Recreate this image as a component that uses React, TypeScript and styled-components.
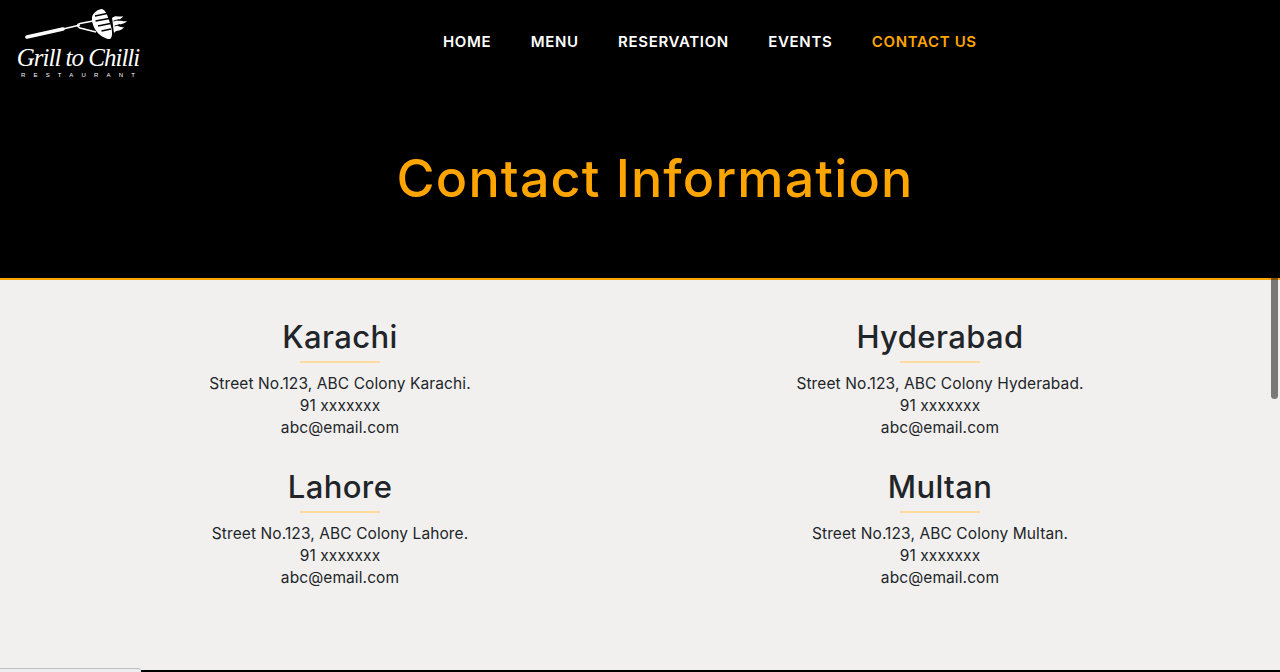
import React from "react";
import styled, { createGlobalStyle } from "styled-components";

const Global = createGlobalStyle`
  html, body { margin: 0; padding: 0; height: 100%; overflow: hidden; background: #f1f0ee; }
  body { font-family: Inter, "Noto Sans", sans-serif; color: #212529; }
`;

const Page = styled.div`
  height: 672px;
  display: flex;
  flex-direction: column;
  position: relative;
  overflow: hidden;
`;

const Hero = styled.header`
  height: 278px;
  background: #000;
  border-bottom: 2px solid #ffa500;
  display: flex;
  flex-direction: column;
`;

const TopBar = styled.div`
  display: flex;
  align-items: flex-start;
  padding: 8px 0 0 16px;
  height: 82px;
  box-sizing: border-box;
`;

const Logo = styled.div`
  width: 124px;
  display: flex;
  flex-direction: column;
  align-items: center;
  color: #fff;
`;

const LogoMark = styled.svg`
  width: 110px;
  height: 36px;
  display: block;
`;

const LogoName = styled.div`
  font-family: "Liberation Serif", serif;
  font-style: italic;
  font-size: 25px;
  line-height: 24px;
  letter-spacing: -1px;
  white-space: nowrap;
  margin-top: 2px;
`;

const LogoSub = styled.div`
  font-family: "Liberation Sans", sans-serif;
  font-size: 6px;
  line-height: 7px;
  letter-spacing: 8.2px;
  padding-left: 8px;
  white-space: nowrap;
  margin-top: 2px;
`;

const Nav = styled.nav`
  display: flex;
  gap: 39.4px;
  margin-left: 303px;
  padding-top: 24px;
`;

const NavLink = styled.a<{ $active?: boolean }>`
  font-size: 15px;
  line-height: 20px;
  font-weight: 600;
  letter-spacing: 0.66px;
  white-space: nowrap;
  color: ${(p) => (p.$active ? "#ffa500" : "#fff")};
`;

const Title = styled.h1`
  margin: 0;
  padding: 67px 0 0 30px;
  text-align: center;
  font-size: 52px;
  line-height: 60px;
  font-weight: 500;
  letter-spacing: 1.15px;
  color: #ffa500;
`;

const Content = styled.main`
  flex: 1;
  display: grid;
  grid-template-columns: 1fr 1fr;
  grid-auto-rows: 150px;
  padding: 39px 40px 0;
  border-bottom: 2px solid #000;
`;

const Office = styled.section`
  display: flex;
  flex-direction: column;
  align-items: center;
  text-align: center;
`;

const City = styled.h2`
  margin: 0;
  font-size: 31px;
  line-height: 36px;
  font-weight: 500;
  letter-spacing: 0.4px;
`;

const Rule = styled.div`
  width: 80px;
  height: 2px;
  background: #fddb9f;
  margin: 6px 0 10px;
`;

const Line = styled.p`
  margin: 0;
  font-size: 15.5px;
  line-height: 22px;
  letter-spacing: 0.1px;
`;

const Scrollbar = styled.div`
  position: absolute;
  top: 260px;
  right: 2px;
  width: 7px;
  height: 139px;
  border-radius: 4px;
  background: rgba(0, 0, 0, 0.5);
`;

const Badge = styled.div`
  position: absolute;
  left: 0;
  bottom: 0;
  width: 141px;
  height: 4px;
  background: #eceef2;
  border-top: 1px solid #bdbdbd;
  border-top-right-radius: 3px;
  box-sizing: border-box;
`;

const links = ["HOME", "MENU", "RESERVATION", "EVENTS"];
const offices = ["Karachi", "Hyderabad", "Lahore", "Multan"];

export default function App() {
  return (
    <Page>
      <Global />
      <Hero>
        <TopBar>
          <Logo>
            <LogoMark viewBox="0 0 110 36">
              <path d="M4 29 L40 21" stroke="#fff" strokeWidth="3.6" strokeLinecap="round" />
              <path d="M40 21 L57 17" stroke="#fff" strokeWidth="1.6" />
              <path d="M70 13 L57 15.5 Q52 17 57 20 L73 24" stroke="#fff" strokeWidth="1.5" fill="none" />
              <path d="M69 9 C70 5 75 1 79 1 C83 2 85 9 87 15 C89 21 90 27 88 30 C87 32 84 31 80 29 C74 26 68 17 69 9 Z" fill="#fff" />
              <path d="M72 8 L84 5.5 M72.5 13 L86 10.5 M75 18 L87.5 15.5 M78.5 23 L88 21" stroke="#000" strokeWidth="1.3" />
              <path d="M89 10 C93 6 96 10 100 8 C99 11 96 11 94 13 C98 12 101 14 104 13 C101 17 97 15 94 18 C97 18 99 20 101 19 C98 24 94 21 91 25 C90 20 90 15 89 10 Z" fill="#fff" />
              <path d="M90.5 13 L96 11.5 M91.5 18 L97 16.5" stroke="#000" strokeWidth="0.9" />
            </LogoMark>
            <LogoName>Grill to Chilli</LogoName>
            <LogoSub>RESTAURANT</LogoSub>
          </Logo>
          <Nav>
            {links.map((l) => (
              <NavLink key={l}>{l}</NavLink>
            ))}
            <NavLink $active>CONTACT US</NavLink>
          </Nav>
        </TopBar>
        <Title>Contact Information</Title>
      </Hero>
      <Content>
        {offices.map((c) => (
          <Office key={c}>
            <City>{c}</City>
            <Rule />
            <Line>Street No.123, ABC Colony {c}.</Line>
            <Line>91 xxxxxxx</Line>
            <Line>abc@email.com</Line>
          </Office>
        ))}
      </Content>
      <Scrollbar />
      <Badge />
    </Page>
  );
}
